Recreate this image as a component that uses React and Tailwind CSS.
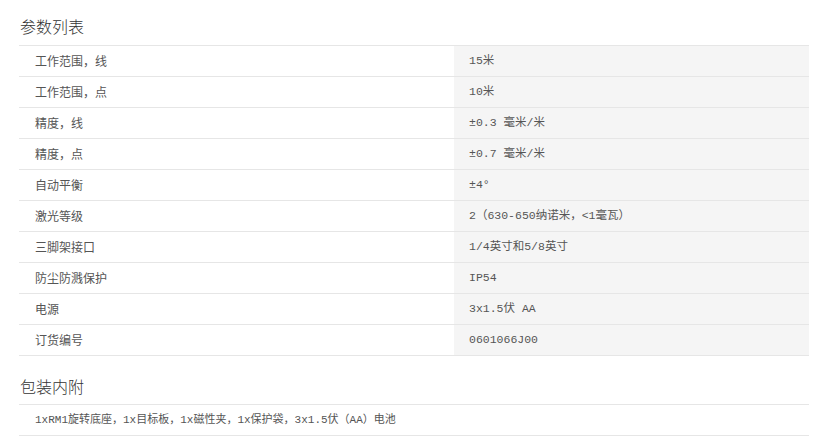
const specs = [
  ["工作范围，线", "15米"],
  ["工作范围，点", "10米"],
  ["精度，线", "±0.3 毫米/米"],
  ["精度，点", "±0.7 毫米/米"],
  ["自动平衡", "±4°"],
  ["激光等级", "2（630-650纳诺米，<1毫瓦）"],
  ["三脚架接口", "1/4英寸和5/8英寸"],
  ["防尘防溅保护", "IP54"],
  ["电源", "3x1.5伏 AA"],
  ["订货编号", "0601066J00"],
];

const cjk = "font-['Noto_Sans_CJK_SC',sans-serif]";
const mono = "font-['Liberation_Mono','Noto_Sans_CJK_SC',monospace]";

const App = () => {
  return (
    <div className={`w-[826px] h-[445px] bg-white pl-[19px] ${cjk}`}>
      <div className="w-[790px]">
        <h2 className="pt-[14px] mb-[7px] pl-px text-[16px] leading-6 font-light text-[#333]">
          参数列表
        </h2>
        <div className="border-b border-[#e6e6e6]">
          {specs.map(([label, value]) => (
            <div
              key={label}
              className="grid grid-cols-[435px_355px] h-[31px] border-t border-[#e6e6e6] text-[12px] text-[#555]"
            >
              <div className="flex items-center pl-4">{label}</div>
              <div className={`flex items-center pl-[15px] bg-[#f5f5f5] ${mono} text-[11.5px]`}>
                {value}
              </div>
            </div>
          ))}
        </div>
        <h2 className="mt-[18px] mb-[6px] pl-px text-[16px] leading-6 font-light text-[#333]">
          包装内附
        </h2>
        <div className={`h-[32px] flex items-center pl-4 border-y border-[#e6e6e6] text-[11px] text-[#555] ${mono}`}>
          1xRM1旋转底座，1x目标板，1x磁性夹，1x保护袋，3x1.5伏（AA）电池
        </div>
      </div>
    </div>
  );
};

export default App;
